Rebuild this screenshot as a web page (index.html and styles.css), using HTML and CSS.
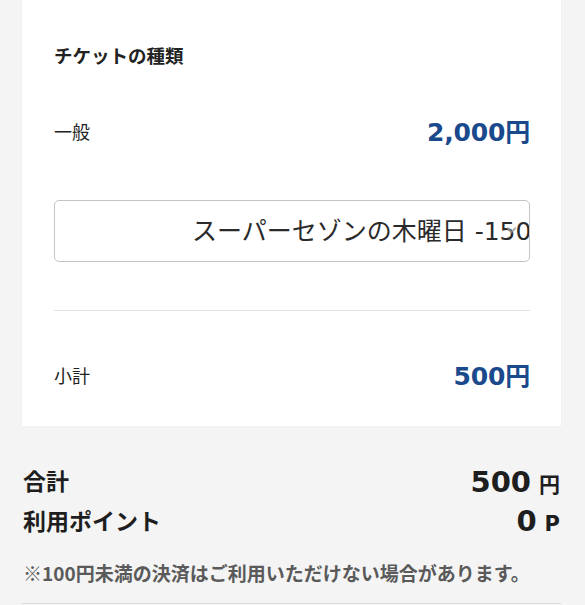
FILE: index.html
```html
<!DOCTYPE html>
<html lang="ja">
<head>
<meta charset="utf-8">
<link rel="stylesheet" href="styles.css">
</head>
<body>
<div class="wrap">
  <section class="card">
    <h2 class="title">チケットの種類</h2>
    <div class="row row-general">
      <span class="label">一般</span>
      <span class="price">2,000円</span>
    </div>
    <div class="select">
      <span class="select-text">スーパーセゾンの木曜日 -150</span>
      <span class="select-arrow"></span>
    </div>
    <hr class="divider">
    <div class="row row-subtotal">
      <span class="label">小計</span>
      <span class="price">500円</span>
    </div>
  </section>
  <section class="summary">
    <div class="sum-row">
      <span class="sum-label">合計</span>
      <span class="sum-value"><span class="num">500</span> <span class="unit">円</span></span>
    </div>
    <div class="sum-row">
      <span class="sum-label">利用ポイント</span>
      <span class="sum-value"><span class="num">0</span> <span class="unit unit-p">P</span></span>
    </div>
    <p class="note">※100円未満の決済はご利用いただけない場合があります。</p>
    <div class="bottom-line"></div>
  </section>
</div>
</body>
</html>
```
FILE: styles.css
```css
html, body {
  margin: 0;
  padding: 0;
}
body {
  background: #f4f4f4;
  font-family: "DejaVu Sans", "Noto Sans CJK JP", sans-serif;
  color: #222;
  width: 585px;
  height: 605px;
  overflow: hidden;
}
.wrap {
  padding: 0 24px 0 22px;
}
.card {
  background: #fff;
  padding: 42px 31px 31px 32px;
  box-shadow: 0 0 2px rgba(0,0,0,0.05);
}
.title {
  margin: 0;
  font-family: "Noto Sans CJK JP", sans-serif;
  font-size: 18.5px;
  font-weight: 700;
  line-height: 26px;
  color: #222;
}
.row {
  display: flex;
  justify-content: space-between;
  align-items: center;
  height: 36px;
}
.row-general {
  margin-top: 47px;
}
.row-subtotal {
  margin-top: 48px;
}
.label {
  font-family: "Noto Sans CJK JP", sans-serif;
  font-size: 18px;
  line-height: 26px;
  color: #222;
  margin-top: -4px;
}
.price {
  font-family: "DejaVu Sans", "Noto Sans CJK JP", sans-serif;
  font-weight: 700;
  font-size: 25px;
  line-height: 36px;
  color: #1b4a8c;
  letter-spacing: -0.2px;
}
.select {
  position: relative;
  margin-top: 49px;
  height: 60px;
  border: 1px solid #c4c4c4;
  border-radius: 5px;
  overflow: hidden;
  white-space: nowrap;
  display: flex;
  align-items: center;
  padding-left: 137px;
}
.select-text {
  position: relative;
  font-family: "DejaVu Sans", "Noto Sans CJK JP", sans-serif;
  font-size: 25px;
  line-height: 34px;
  color: #2a2a2a;
  margin-top: 2px;
}
.select-arrow {
  position: absolute;
  right: 14px;
  top: 24px;
  width: 5px;
  height: 5px;
  border-right: 2px solid rgba(150,150,150,0.8);
  border-bottom: 2px solid rgba(150,150,150,0.8);
  transform: rotate(45deg);
}
.divider {
  margin: 48px 0 0;
  border: 0;
  border-top: 1px solid #e2e2e2;
  height: 0;
}
.summary {
  padding: 35px 1px 0 1px;
}
.sum-row {
  display: flex;
  justify-content: space-between;
  align-items: center;
  height: 40px;
}
.sum-label {
  font-family: "Noto Sans CJK JP", sans-serif;
  font-weight: 700;
  font-size: 23px;
  line-height: 40px;
  color: #1e1e1e;
  margin-top: -3px;
}
.sum-value {
  font-family: "DejaVu Sans", "Noto Sans CJK JP", sans-serif;
  font-weight: 700;
  color: #1e1e1e;
  line-height: 40px;
  display: flex;
  align-items: baseline;
  gap: 8px;
  margin-top: 3px;
}
.num {
  font-size: 29px;
}
.unit {
  font-family: "Noto Sans CJK JP", sans-serif;
  font-size: 21px;
}
.unit-p {
  font-family: "DejaVu Sans", sans-serif;
  font-size: 21px;
}
.note {
  margin: 18px 0 0;
  font-family: "Noto Sans CJK JP", sans-serif;
  font-weight: 700;
  font-size: 19px;
  line-height: 28px;
  color: #5a5a5a;
}
.bottom-line {
  margin: 16px -1px 0;
  border-top: 1px solid #dcdcdc;
  height: 10px;
}
```
